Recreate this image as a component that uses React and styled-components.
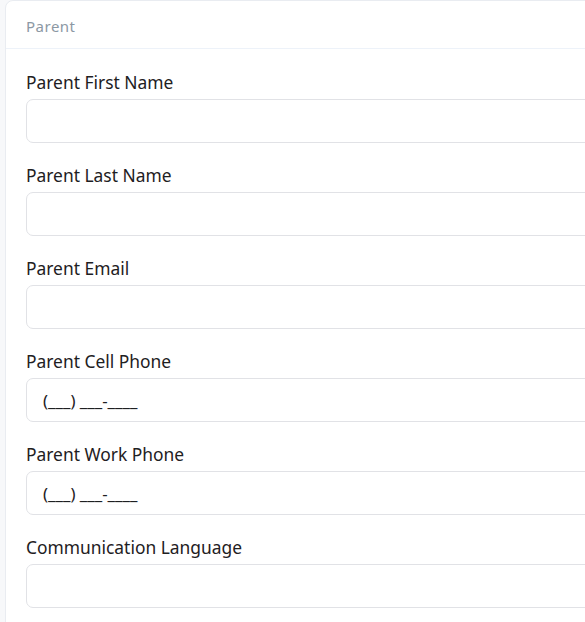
import React from 'react'
import styled, { createGlobalStyle } from 'styled-components'

const Global = createGlobalStyle`
	body {
		margin: 0;
		background: #f7f8fa;
		font-family: "Noto Sans", "Liberation Sans", sans-serif;
		overflow: hidden;
	}
`

const Card = styled.div`
	width: 640px;
	margin-left: 5px;
	background: #fff;
	border: 1px solid #e9ecf1;
	border-radius: 8px 0 0 0;
`
const Header = styled.div`
	height: 44px;
	padding: 3px 0 0 20px;
	display: flex;
	align-items: center;
	border-bottom: 1px solid #edf2f9;
	font-size: 15px;
	color: #8c98a4;
	letter-spacing: 0.5px;
`
const Body = styled.div`
	padding: 21px 20px;
	display: flex;
	flex-direction: column;
	gap: 20px;
`
const Field = styled.div`
	display: flex;
	flex-direction: column;
	gap: 5px;
`
const Label = styled.label`
	font-size: 17.4px;
	line-height: 24px;
	color: #1e2022;
`
const Input = styled.div`
	height: 42px;
	border: 1px solid #e1e2e6;
	border-radius: 7px;
	padding-left: 16px;
	display: flex;
	align-items: center;
	font-size: 16.8px;
	color: #1e2022;
`

const fields = [
	{ label: 'Parent First Name' },
	{ label: 'Parent Last Name' },
	{ label: 'Parent Email' },
	{ label: 'Parent Cell Phone', mask: '(___) ___-____' },
	{ label: 'Parent Work Phone', mask: '(___) ___-____' },
	{ label: 'Communication Language' },
]

const App = () => {
	return (
		<>
			<Global />
			<Card>
				<Header>Parent</Header>
				<Body>
					{fields.map((f) => (
						<Field key={f.label}>
							<Label>{f.label}</Label>
							<Input>{f.mask}</Input>
						</Field>
					))}
				</Body>
			</Card>
		</>
	)
}

export default App
